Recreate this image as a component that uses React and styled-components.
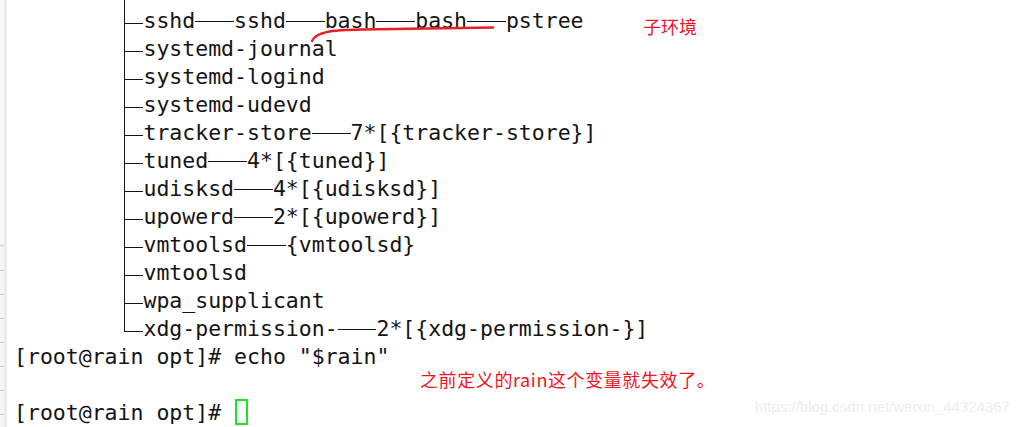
import React from "react";
import styled, { createGlobalStyle } from "styled-components";

const Global = createGlobalStyle`
  html, body { margin: 0; padding: 0; background: #ffffff; }
  #root { width: 1020px; height: 427px; }
`;

const Page = styled.div`
  display: flex;
  width: 1020px;
  height: 427px;
  overflow: hidden;
  position: relative;
  background: #fff;
`;

const Gutter = styled.div`
  width: 4px;
  flex: 0 0 4px;
  border-right: 3px solid #ececec;
  display: flex;
  flex-direction: column;
  background: #f8f8f8;
`;

const GutterTop = styled.div`
  height: 244px;
  flex: 0 0 244px;
  background: #f8f8f8;
`;

const GutterBand = styled.div`
  height: 3px;
  flex: 0 0 3px;
  background: #e2e2e2;
`;

const GutterCell = styled.div`
  height: 23px;
  flex: 0 0 23px;
  background: #f5f5f5;
  border-bottom: 1px solid #c9c9c9;
`;

const Terminal = styled.div`
  flex: 1;
  padding-left: 7px;
  padding-top: 1px;
  font-family: "DejaVu Sans Mono", "Liberation Mono", monospace;
  font-size: 21.5px;
  color: #141414;
  display: flex;
  flex-direction: column;
`;

const Tree = styled.div`
  position: relative;
  margin-top: -1px;
  padding-top: 7px;
  padding-left: 10ch;
  display: flex;
  flex-direction: column;

  &::before {
    content: "";
    position: absolute;
    left: 8.5ch;
    top: 0;
    bottom: 12px;
    width: 1px;
    background: #141414;
  }
`;

const Row = styled.div`
  position: relative;
  height: 28px;
  line-height: 28px;
  white-space: pre;

  &::before {
    content: "";
    position: absolute;
    left: -1.5ch;
    top: 16px;
    width: 1.5ch;
    height: 1px;
    background: #141414;
  }
`;

const Dash = styled.span`
  display: inline-block;
  width: ${(p) => p.$n || 3}ch;
  height: 1px;
  background: #141414;
  vertical-align: 6px;
`;

const Line = styled.div`
  height: 28px;
  line-height: 28px;
  white-space: pre;
  display: flex;
  align-items: flex-start;
`;

const Cursor = styled.span`
  display: inline-block;
  box-sizing: border-box;
  width: 13px;
  height: 26px;
  margin-top: 0;
  margin-left: 1px;
  border: 2px solid #1ee61e;
`;

const Note = styled.div`
  position: absolute;
  left: ${(p) => p.$x}px;
  top: ${(p) => p.$y}px;
  font-family: "Noto Sans CJK SC", "Noto Sans", sans-serif;
  font-size: 18px;
  line-height: 22px;
  color: #f0141e;
  white-space: nowrap;
  letter-spacing: ${(p) => p.$ls || 0}px;
`;

const Scribble = styled.svg`
  position: absolute;
  left: 0;
  top: 0;
  pointer-events: none;
`;

const Watermark = styled.div`
  position: absolute;
  right: 10px;
  top: 397px;
  font-family: "Liberation Sans", Arial, sans-serif;
  font-size: 15px;
  line-height: 20px;
  color: #ededed;
  white-space: nowrap;
`;

const tree = [
  ["sshd", "sshd", "bash", "bash", "pstree"],
  ["systemd-journal"],
  ["systemd-logind"],
  ["systemd-udevd"],
  ["tracker-store", "7*[{tracker-store}]"],
  ["tuned", "4*[{tuned}]"],
  ["udisksd", "4*[{udisksd}]"],
  ["upowerd", "2*[{upowerd}]"],
  ["vmtoolsd", "{vmtoolsd}"],
  ["vmtoolsd"],
  ["wpa_supplicant"],
  ["xdg-permission-", "2*[{xdg-permission-}]"],
];

export default function App() {
  return (
    <>
      <Global />
      <Page>
        <Gutter>
          <GutterTop />
          <GutterBand />
          {Array.from({ length: 8 }).map((_, i) => (
            <GutterCell key={i} />
          ))}
        </Gutter>
        <Terminal>
          <Tree>
            {tree.map((parts, i) => (
              <Row key={i}>
                {parts.map((p, j) => (
                  <React.Fragment key={j}>
                    {j > 0 && <Dash $n={3} />}
                    {p}
                  </React.Fragment>
                ))}
              </Row>
            ))}
          </Tree>
          <Line>[root@rain opt]# echo "$rain"</Line>
          <Line> </Line>
          <Line>
            [root@rain opt]# <Cursor />
          </Line>
        </Terminal>
        <Note $x={643} $y={15}>子环境</Note>
        <Note $x={420} $y={368} $ls={0.6}>之前定义的rain这个变量就失效了。</Note>
        <Scribble width="1020" height="427" viewBox="0 0 1020 427">
          <path
            d="M312 41 C 316 32, 330 30, 362 29.5 L 493 27.5"
            fill="none"
            stroke="#ec1c24"
            strokeWidth="2.4"
            strokeLinecap="round"
          />
        </Scribble>
        <Watermark>https://blog.csdn.net/weixin_44324367</Watermark>
      </Page>
    </>
  );
}
